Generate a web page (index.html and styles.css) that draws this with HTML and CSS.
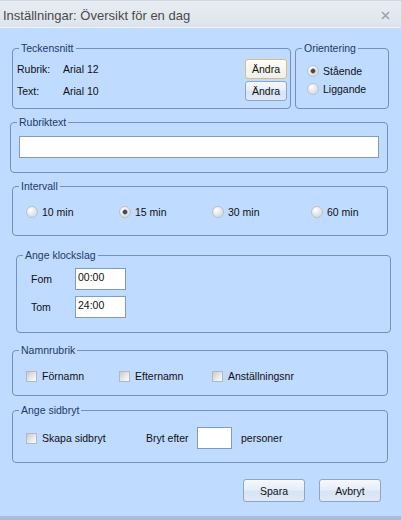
FILE: index.html
```html
<!DOCTYPE html>
<html lang="sv">
<head>
<meta charset="utf-8" />
<title>Inställningar: Översikt för en dag</title>
<link rel="stylesheet" href="styles.css">
</head>
<body>
  <div id="dialog">
    <div id="titlebar">
      <span class="title">Inställningar: Översikt för en dag</span>
      <svg class="close" width="9" height="9" viewBox="0 0 9 9"><path d="M1 1L8 8M8 1L1 8" stroke="#9ba3ad" stroke-width="1.6" /></svg>
    </div>
    <div id="content">
      <div class="toprow">
        <fieldset class="group fonts">
          <legend>Teckensnitt</legend>
          <div class="fontrow"><span class="lbl">Rubrik:</span><span>Arial 12</span><button class="btn focus">Ändra</button></div>
          <div class="fontrow"><span class="lbl">Text:</span><span>Arial 10</span><button class="btn">Ändra</button></div>
        </fieldset>
        <fieldset class="group orient">
          <legend>Orientering</legend>
          <label class="opt"><input type="radio" name="orient" checked />Stående</label>
          <label class="opt"><input type="radio" name="orient" />Liggande</label>
        </fieldset>
      </div>

      <fieldset class="group heading">
        <legend>Rubriktext</legend>
        <input type="text" class="field" />
      </fieldset>

      <fieldset class="group block interval">
        <legend>Intervall</legend>
        <div class="optrow">
          <label class="opt"><input type="radio" name="interval" />10 min</label>
          <label class="opt"><input type="radio" name="interval" checked />15 min</label>
          <label class="opt"><input type="radio" name="interval" />30 min</label>
          <label class="opt"><input type="radio" name="interval" />60 min</label>
        </div>
      </fieldset>

      <fieldset class="group clock">
        <legend>Ange klockslag</legend>
        <div class="timerow"><span>Fom</span><input type="text" class="time" value="00:00" /></div>
        <div class="timerow"><span>Tom</span><input type="text" class="time" value="24:00" /></div>
      </fieldset>

      <fieldset class="group block names">
        <legend>Namnrubrik</legend>
        <div class="optrow">
          <label class="opt"><input type="checkbox" />Förnamn</label>
          <label class="opt"><input type="checkbox" />Efternamn</label>
          <label class="opt"><input type="checkbox" />Anställningsnr</label>
        </div>
      </fieldset>

      <fieldset class="group block pagebreak">
        <legend>Ange sidbryt</legend>
        <div class="breakrow">
          <label class="opt"><input type="checkbox" />Skapa sidbryt</label>
          <span class="after">Bryt efter</span>
          <input type="text" class="count" />
          <span>personer</span>
        </div>
      </fieldset>

      <div class="actions">
        <button class="btn">Spara</button>
        <button class="btn">Avbryt</button>
      </div>
    </div>
  </div>
</body>
</html>
```

FILE: styles.css
```css
body
{
	margin: 0;
	font-family: "Liberation Sans", Arial, sans-serif;
	font-size: 10.5px;
	color: #111;
}
#dialog
{
	width: 401px;
	height: 520px;
	box-sizing: border-box;
	background: #bfdbff;
	border-bottom: 4px solid #a9bdd7;
	display: flex;
	flex-direction: column;
}


#titlebar
{
	flex: none;
	height: 28px;
	box-sizing: border-box;
	display: flex;
	align-items: center;
	padding: 2px 11px 0 3px;
	background: linear-gradient(#e8edf3, #dde4ec);
	border-top: 1px solid #d0d8e2;
	border-bottom: 1px solid #eef3f9;
}
.title
{
	flex: 1;
	font-size: 13px;
	color: #4a4a4a;
}
.close
{
	display: block;
}
#content
{
	flex: 1;
}


/* group boxes */
.group
{
	margin: 0;
	padding: 0 4px;
	border: 1px solid #7291bc;
	border-radius: 4px;
	box-sizing: border-box;
	min-width: 0;
}
.group legend
{
	margin-left: 2px;
	padding: 0 2px;
	line-height: 13px;
	color: #1b3a6b;
}
.block
{
	margin-left: 12px;
	width: 376px;
}


.toprow
{
	display: flex;
	height: 67px;
	margin: 14px 0 0 12px;
}
.fonts
{
	width: 279px;
	padding: 3px 3px 0 4px;
}
.fontrow
{
	display: flex;
	align-items: center;
	height: 22px;
}
.lbl
{
	width: 46px;
}
.fontrow .btn
{
	margin-left: auto;
	width: 42px;
	height: 20px;
}
.orient
{
	width: 94px;
	margin-left: 4px;
	padding-top: 8px;
}
.orient .opt
{
	margin: 0 0 2px 7px;
}


.opt
{
	display: flex;
	align-items: center;
	height: 16px;
}
.opt input
{
	-webkit-appearance: none;
	appearance: none;
	flex: none;
	margin: 0 4px 0 0;
	width: 12px;
	height: 12px;
	border: 1px solid #bac1ca;
	border-radius: 50%;
	background: radial-gradient(circle at 35% 30%, #fff, #d6dbe1 75%);
}
.opt input:checked
{
	background: radial-gradient(circle, #4a4a4a 0 1.6px, #8a8a8a 2.2px, transparent 3px), radial-gradient(circle at 35% 30%, #fff, #d6dbe1 75%);
}
.opt input[type=checkbox]
{
	width: 11px;
	height: 11px;
	margin-right: 5px;
	border: 1px solid #b3b8bf;
	border-radius: 0;
	background: linear-gradient(135deg, #c6cad0, #eceef1 65%, #fafbfc);
}


.heading
{
	margin: 7px 0 0 10px;
	width: 378px;
	height: 57px;
	padding-top: 7px;
}
.field
{
	display: block;
	width: 360px;
	height: 22px;
	margin: 0 0 0 4px;
	box-sizing: border-box;
	border: 1px solid #7f9db9;
	background: #fff;
}


.interval
{
	margin-top: 7px;
	height: 56px;
	padding-top: 11px;
}
.optrow
{
	display: grid;
	grid-template-columns: 93px 93px 99px auto;
	padding-left: 9px;
}


.clock
{
	margin: 13px 0 0 16px;
	width: 375px;
	height: 84px;
	padding-top: 6px;
}
.timerow
{
	display: flex;
	align-items: center;
	margin-bottom: 6px;
}
.timerow span
{
	width: 54px;
	padding-left: 10px;
	box-sizing: border-box;
}
.time,
.count
{
	width: 51px;
	height: 22px;
	margin: 0;
	padding: 1px 2px 5px;
	box-sizing: border-box;
	border: 1px solid #7f9db9;
	background: #fff;
	font: inherit;
	color: #111;
}


.names
{
	margin-top: 11px;
	height: 52px;
	padding-top: 11px;
}
.pagebreak
{
	margin-top: 8px;
	height: 59px;
	padding-top: 10px;
}
.breakrow
{
	display: flex;
	align-items: center;
	height: 22px;
	padding-left: 9px;
}
.breakrow .opt
{
	width: 120px;
}
.after
{
	width: 51px;
}
.count
{
	width: 35px;
	margin-right: 9px;
}


/* buttons */
.btn
{
	padding: 0;
	font: inherit;
	color: #111;
	border: 1px solid #8da6c6;
	border-radius: 3px;
	background: linear-gradient(#f5f8fc, #e7eef8 45%, #d8e4f4 55%, #e0e9f6);
}
.btn.focus
{
	border-color: #dcbf76;
	background: linear-gradient(#fffdf7, #f7f5ee 50%, #efefea);
}
.actions
{
	display: flex;
	justify-content: flex-end;
	gap: 14px;
	margin-top: 16px;
	padding-right: 20px;
}
.actions .btn
{
	width: 62px;
	height: 23px;
}
```
